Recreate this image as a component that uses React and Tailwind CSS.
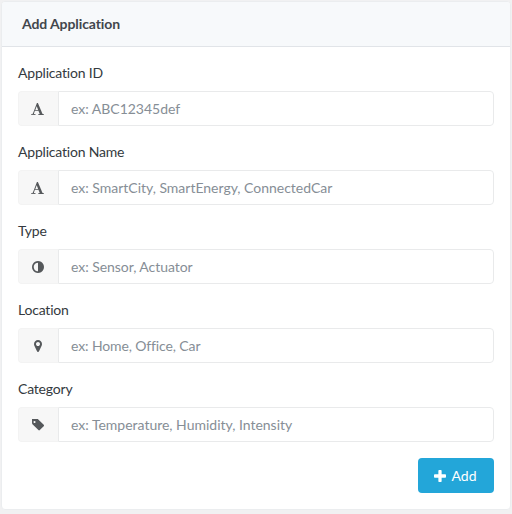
function Font() {
  return (
    <svg viewBox="0 0 1664 1792" className="h-[14px] w-[13px]" fill="currentColor">
      <path d="M725 559l-170 450q33 0 136.500 2t160.500 2q19 0 57-2q-87-253-184-452zM0 1664l2-79q23-7 56-12.500t57-10.500t49.500-14.500t44.500-29t31-50.500l237-616l280-724h128q8 14 11 21l205 480q33 78 106 257.500t114 274.500q15 34 58 144.500t72 168.500q20 45 35 57q19 15 88 29.500t84 20.500q6 38 6 57q0 4-.5 13t-.5 13q-63 0-190-8t-191-8q-76 0-215 7t-178 8q0-43 4-78l131-28q1 0 12.500-2.500t15.500-3.500t14.500-4.500t15-6.500t11-8t9-11t2.500-14q0-16-31-96.500t-72-177.500t-42-100l-450-2q-26 58-76.500 195.500t-50.500 162.500q0 22 14 37.500t43.500 24.500t48.500 13.500t57 8.500t41 4q1 19 1 58q0 9-2 27q-58 0-174.500-10t-174.500-10q-8 0-26.500 4t-21.500 4q-80 14-188 14z" />
    </svg>
  );
}

function Adjust() {
  return (
    <svg viewBox="0 128 1536 1536" className="size-3" fill="currentColor">
      <path d="M768 1440v-1088q-148 0-273 73t-198 198t-73 273t73 273t198 198t273 73zM1536 896q0 209-103 385.500t-279.500 279.500t-385.500 103t-385.500-103t-279.500-279.500t-103-385.500t103-385.500t279.500-279.500t385.500-103t385.500 103t279.500 279.500t103 385.500z" />
    </svg>
  );
}

function Marker() {
  return (
    <svg viewBox="0 128 1024 1536" className="h-3 w-2" fill="currentColor">
      <path d="M768 640q0-106-75-181t-181-75t-181 75t-75 181t75 181t181 75t181-75t75-181zM1024 640q0 109-33 179l-364 774q-16 33-47.500 52t-67.500 19t-67.500-19t-46.500-52l-365-774q-33-70-33-179q0-212 150-362t362-150t362 150t150 362z" />
    </svg>
  );
}

function Tag() {
  return (
    <svg viewBox="0 256 1515 1408" className="size-3" fill="currentColor">
      <path d="M448 576q0-53-37.500-90.500t-90.500-37.500t-90.500 37.500t-37.500 90.500t37.500 90.500t90.500 37.500t90.500-37.500t37.500-90.500zM1515 1024q0 53-37 90l-491 492q-39 37-91 37q-53 0-90-37l-715-716q-38-37-64.500-101t-26.500-117v-416q0-52 38-90t90-38h416q53 0 117 26.500t102 64.500l715 714q37 39 37 91z" />
    </svg>
  );
}

function Plus() {
  return (
    <svg viewBox="0 0 1408 1408" className="size-3" fill="currentColor">
      <path d="M1408 608v192q0 40-28 68t-68 28h-416v416q0 40-28 68t-68 28h-192q-40 0-68-28t-28-68v-416h-416q-40 0-68-28t-28-68v-192q0-40 28-68t68-28h416v-416q0-40 28-68t68-28h192q40 0 68 28t28 68v416h416q40 0 68 28t28 68z" />
    </svg>
  );
}

const fields = [
  { label: "Application ID", placeholder: "ex: ABC12345def", Icon: Font, tracking: "tracking-[-0.02px]" },
  { label: "Application Name", placeholder: "ex: SmartCity, SmartEnergy, ConnectedCar", Icon: Font, tracking: "tracking-[-0.01px]" },
  { label: "Type", placeholder: "ex: Sensor, Actuator", Icon: Adjust, tracking: "tracking-[-0.05px]" },
  { label: "Location", placeholder: "ex: Home, Office, Car", Icon: Marker, tracking: "tracking-[-0.12px]" },
  { label: "Category", placeholder: "ex: Temperature, Humidity, Intensity", Icon: Tag, tracking: "tracking-[-0.01px]" },
];

export default function App() {
  return (
    <main className="h-[514px] w-[512px] bg-[#f1f1f2] p-px pb-1 font-[Lato,sans-serif] text-sm text-[#343a40]">
      <section className="flex h-full flex-col overflow-hidden rounded border border-[#ebedef] bg-white">
        <h1 className="h-[45px] shrink-0 border-b border-[#e1e4e8] bg-[#f7f9fb] pl-5 text-sm leading-[44px] font-bold tracking-[-0.1px] text-[#42464c]">
          Add Application
        </h1>
        <form className="flex flex-col px-4 pt-[15px]">
          {fields.map(({ label, placeholder, Icon, tracking }) => (
            <div key={label} className="h-[79px]">
              <label className="block h-[29px] leading-[21px] tracking-[-0.2px]">{label}</label>
              <div className="flex h-[35px]">
                <span className="flex w-10 items-center justify-center rounded-l border border-r-0 border-[#f3f3f3] bg-[#f7f7f7] pr-[2px] text-[#55585b]">
                  <Icon />
                </span>
                <input
                  placeholder={placeholder}
                  className={`min-w-0 flex-1 rounded-r border border-[#e9eaeb] px-3 outline-none placeholder:text-[#868e96] ${tracking}`}
                />
              </div>
            </div>
          ))}
          <button
            type="button"
            className="mt-px flex h-[35px] w-[76px] items-center justify-center gap-[5px] self-end rounded bg-[#23a6d9] pr-px text-white"
          >
            <Plus />
            Add
          </button>
        </form>
      </section>
    </main>
  );
}
